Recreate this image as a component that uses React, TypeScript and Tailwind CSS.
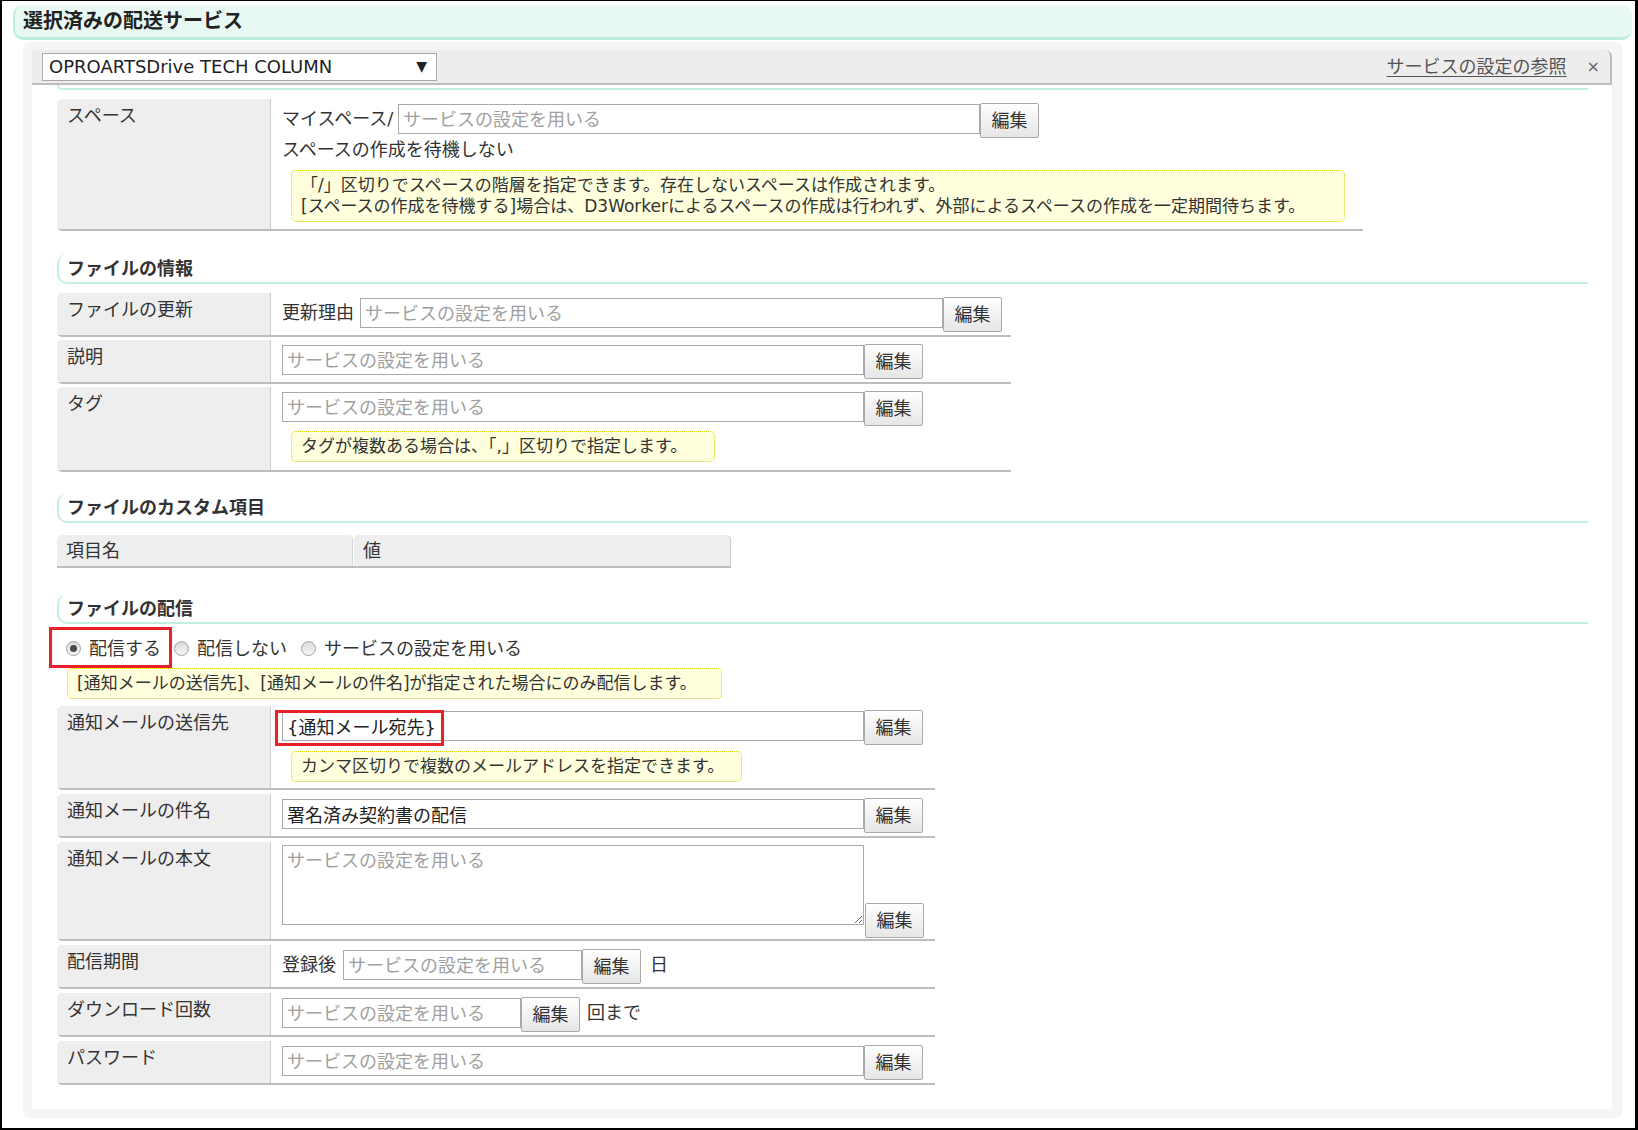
import type { ReactNode } from 'react'

const BTN =
  'h-[35px] w-[59px] shrink-0 rounded-[2px] border border-[#a9a9a9] bg-linear-to-b from-white to-[#e6e6e6] text-[18px] leading-[33px] text-[#333]'

function Field({ w, value, placeholder }: { w: string; value?: string; placeholder?: string }) {
  return (
    <input
      readOnly
      value={value ?? ''}
      placeholder={placeholder ?? 'サービスの設定を用いる'}
      className={`mt-px h-[30px] shrink-0 border border-[#a9a9a9] bg-white px-[4px] text-[18px] text-[#222] outline-none placeholder:text-[#a0a0a0] ${w}`}
    />
  )
}

function EditButton() {
  return <button className={BTN}>編集</button>
}

function Note({ w, children }: { w: string; children: ReactNode }) {
  return (
    <div
      className={`rounded-[5px] border border-dotted border-[#d2d200] bg-[#ffffdd] px-[9px] py-[4px] text-[17px] leading-[21px] whitespace-nowrap text-[#333] ${w}`}
    >
      {children}
    </div>
  )
}

function SectionHeader({ title, className }: { title: string; className: string }) {
  return (
    <div
      className={`mr-[24px] h-[30px] rounded-l-[10px] border-b-2 border-l-2 border-[#c3efe0] pl-[8px] text-[18px] leading-[29px] font-bold text-[#333] ${className}`}
    >
      {title}
    </div>
  )
}

function Row({ label, children, className }: { label: string; children: ReactNode; className?: string }) {
  return (
    <div className={`flex rounded-l-[5px] border-b-2 border-[#bdbdbd] ${className ?? ''}`}>
      <div className="w-[214px] shrink-0 rounded-tl-[5px] border-r border-[#cccccc] bg-[#eeeeee] pt-[4px] pl-[10px] text-[18px] leading-[26px] text-[#333]">
        {label}
      </div>
      <div className="min-w-0 flex-1 pt-[4px] pr-[11px] pb-[3px] pl-[11px]">{children}</div>
    </div>
  )
}

function Text({ className, children }: { className?: string; children: ReactNode }) {
  return (
    <span className={`mt-px shrink-0 text-[18px] leading-[30px] whitespace-nowrap ${className ?? ''}`}>
      {children}
    </span>
  )
}

function Radio({ checked, label }: { checked?: boolean; label: string }) {
  return (
    <label className="flex items-center">
      <span className="flex h-[15px] w-[15px] items-center justify-center rounded-full border border-[#a3a3a3] bg-linear-to-b from-[#d9d9d9] to-[#f7f7f7]">
        {checked && <span className="h-[7px] w-[7px] rounded-full bg-[#4a4a4a]" />}
      </span>
      <span className="ml-[8px] text-[18px] leading-[26px] whitespace-nowrap text-[#333]">{label}</span>
    </label>
  )
}

export default function App() {
  return (
    <div className="h-[1130px] w-[1638px] overflow-hidden border-t border-r-[3px] border-b-2 border-l-2 border-black bg-white font-['DejaVu_Sans','Noto_Sans_CJK_JP',sans-serif] text-[#333]">
      {/* 見出し */}
      <div className="mt-[4px] mr-[3px] ml-[11px] h-[35px] rounded-[10px] border-b-[3px] border-l-2 border-[#bdeedd] bg-[#e8f8f3] pl-[8px] text-[20px] leading-[32px] font-bold text-[#222]">
        選択済みの配送サービス
      </div>

      <div className="mt-[2px] mr-[13px] ml-[21px] rounded-[6px] bg-[#f5f5f5] pt-[8px] pr-[10px] pb-[9px] pl-[9px]">
        <div className="h-[1059px] overflow-hidden bg-white">
          {/* タブバー */}
          <div className="flex h-[35px] items-center justify-between rounded-tr-[6px] border-r-2 border-b-2 border-[#bdbdbd] bg-[#ededed] pr-[10px] pl-[10px]">
            <div className="flex h-[28px] w-[395px] items-center justify-between border border-[#a9a9a9] bg-white pr-[9px] pl-[6px] text-[18px] text-[#222]">
              <span>OPROARTSDrive TECH COLUMN</span>
              <span className="text-[14px]">▼</span>
            </div>
            <div className="flex items-center">
              <span className="text-[18px] text-[#555] underline underline-offset-[3px]">サービスの設定の参照</span>
              <span className="ml-[20px] text-[16px] text-[#666]">×</span>
            </div>
          </div>

          <div className="pl-[25px]">
            <div className="mr-[24px] h-[5px] rounded-bl-[8px] border-b-2 border-l-2 border-[#c3efe0]" />

            {/* スペース */}
            <Row label="スペース" className="mt-[9px] w-[1306px]">
              <div className="flex items-start">
                <Text className="w-[116px]">マイスペース/</Text>
                <Field w="w-[582px]" />
                <EditButton />
              </div>
              <div className="text-[18px] leading-[24px]">スペースの作成を待機しない</div>
              <div className="mt-[8px] mb-[4px] ml-[9px]">
                <Note w="w-[1054px]">
                  「/」区切りでスペースの階層を指定できます。存在しないスペースは作成されます。
                  <br />
                  [スペースの作成を待機する]場合は、D3Workerによるスペースの作成は行われず、外部によるスペースの作成を一定期間待ちます。
                </Note>
              </div>
            </Row>

            {/* ファイルの情報 */}
            <SectionHeader title="ファイルの情報" className="mt-[23px]" />
            <div className="mt-[9px] flex w-[954px] flex-col gap-[3px]">
              <Row label="ファイルの更新">
                <div className="flex items-start">
                  <Text className="mr-[6px]">更新理由</Text>
                  <Field w="w-[583px]" />
                  <EditButton />
                </div>
              </Row>
              <Row label="説明">
                <div className="flex items-start">
                  <Field w="w-[582px]" />
                  <EditButton />
                </div>
              </Row>
              <Row label="タグ">
                <div className="flex items-start">
                  <Field w="w-[582px]" />
                  <EditButton />
                </div>
                <div className="mt-[5px] mb-[5px] ml-[9px]">
                  <Note w="w-[424px]">タグが複数ある場合は、「,」区切りで指定します。</Note>
                </div>
              </Row>
            </div>

            {/* ファイルのカスタム項目 */}
            <SectionHeader title="ファイルのカスタム項目" className="mt-[21px]" />
            <div className="mt-[12px] flex w-[674px] border-b-2 border-[#bdbdbd] text-[18px] leading-[31px]">
              <div className="w-[296px] rounded-t-[5px] border-r border-[#d6d6d6] bg-[#eeeeee] pl-[9px]">項目名</div>
              <div className="ml-[1px] flex-1 rounded-t-[5px] border-r border-[#cccccc] bg-[#eeeeee] pl-[9px]">値</div>
            </div>

            {/* ファイルの配信 */}
            <SectionHeader title="ファイルの配信" className="mt-[26px]" />
            <div className="relative flex h-[44px] items-center pt-[5px] pl-[9px]">
              <Radio checked label="配信する" />
              <div className="ml-[13px]">
                <Radio label="配信しない" />
              </div>
              <div className="ml-[14px]">
                <Radio label="サービスの設定を用いる" />
              </div>
              <div className="absolute top-[3px] left-[-8px] h-[41px] w-[123px] border-[3px] border-[#e8202a]" />
            </div>
            <div className="ml-[10px]">
              <Note w="w-[655px]">[通知メールの送信先]、[通知メールの件名]が指定された場合にのみ配信します。</Note>
            </div>

            <div className="mt-[7px] flex w-[878px] flex-col gap-[4px]">
              <Row label="通知メールの送信先">
                <div className="flex items-start">
                  <div className="relative">
                    <Field w="w-[582px]" value="{通知メール宛先}" />
                    <div className="absolute top-0 left-[-7px] h-[36px] w-[169px] border-[3px] border-[#e8202a]" />
                  </div>
                  <EditButton />
                </div>
                <div className="mt-[6px] mb-[3px] ml-[9px]">
                  <Note w="w-[451px]">カンマ区切りで複数のメールアドレスを指定できます。</Note>
                </div>
              </Row>
              <Row label="通知メールの件名">
                <div className="flex items-start">
                  <Field w="w-[582px]" value="署名済み契約書の配信" />
                  <EditButton />
                </div>
              </Row>
              <Row label="通知メールの本文">
                <div className="-mt-px -mb-[2px] flex items-end">
                  <textarea
                    readOnly
                    placeholder="サービスの設定を用いる"
                    className="mb-[13px] h-[80px] w-[584px] border border-[#a9a9a9] px-[4px] py-[2px] text-[18px] leading-[26px] outline-none placeholder:text-[#a0a0a0]"
                  />
                  <div className="ml-[1px]">
                    <EditButton />
                  </div>
                </div>
              </Row>
              <Row label="配信期間">
                <div className="flex items-start">
                  <Text className="mr-[7px]">登録後</Text>
                  <Field w="w-[239px]" />
                  <EditButton />
                  <Text className="ml-[9px]">日</Text>
                </div>
              </Row>
              <Row label="ダウンロード回数">
                <div className="flex items-start">
                  <Field w="w-[239px]" />
                  <EditButton />
                  <Text className="ml-[7px]">回まで</Text>
                </div>
              </Row>
              <Row label="パスワード">
                <div className="flex items-start">
                  <Field w="w-[582px]" />
                  <EditButton />
                </div>
              </Row>
            </div>
          </div>
        </div>
      </div>
    </div>
  )
}
